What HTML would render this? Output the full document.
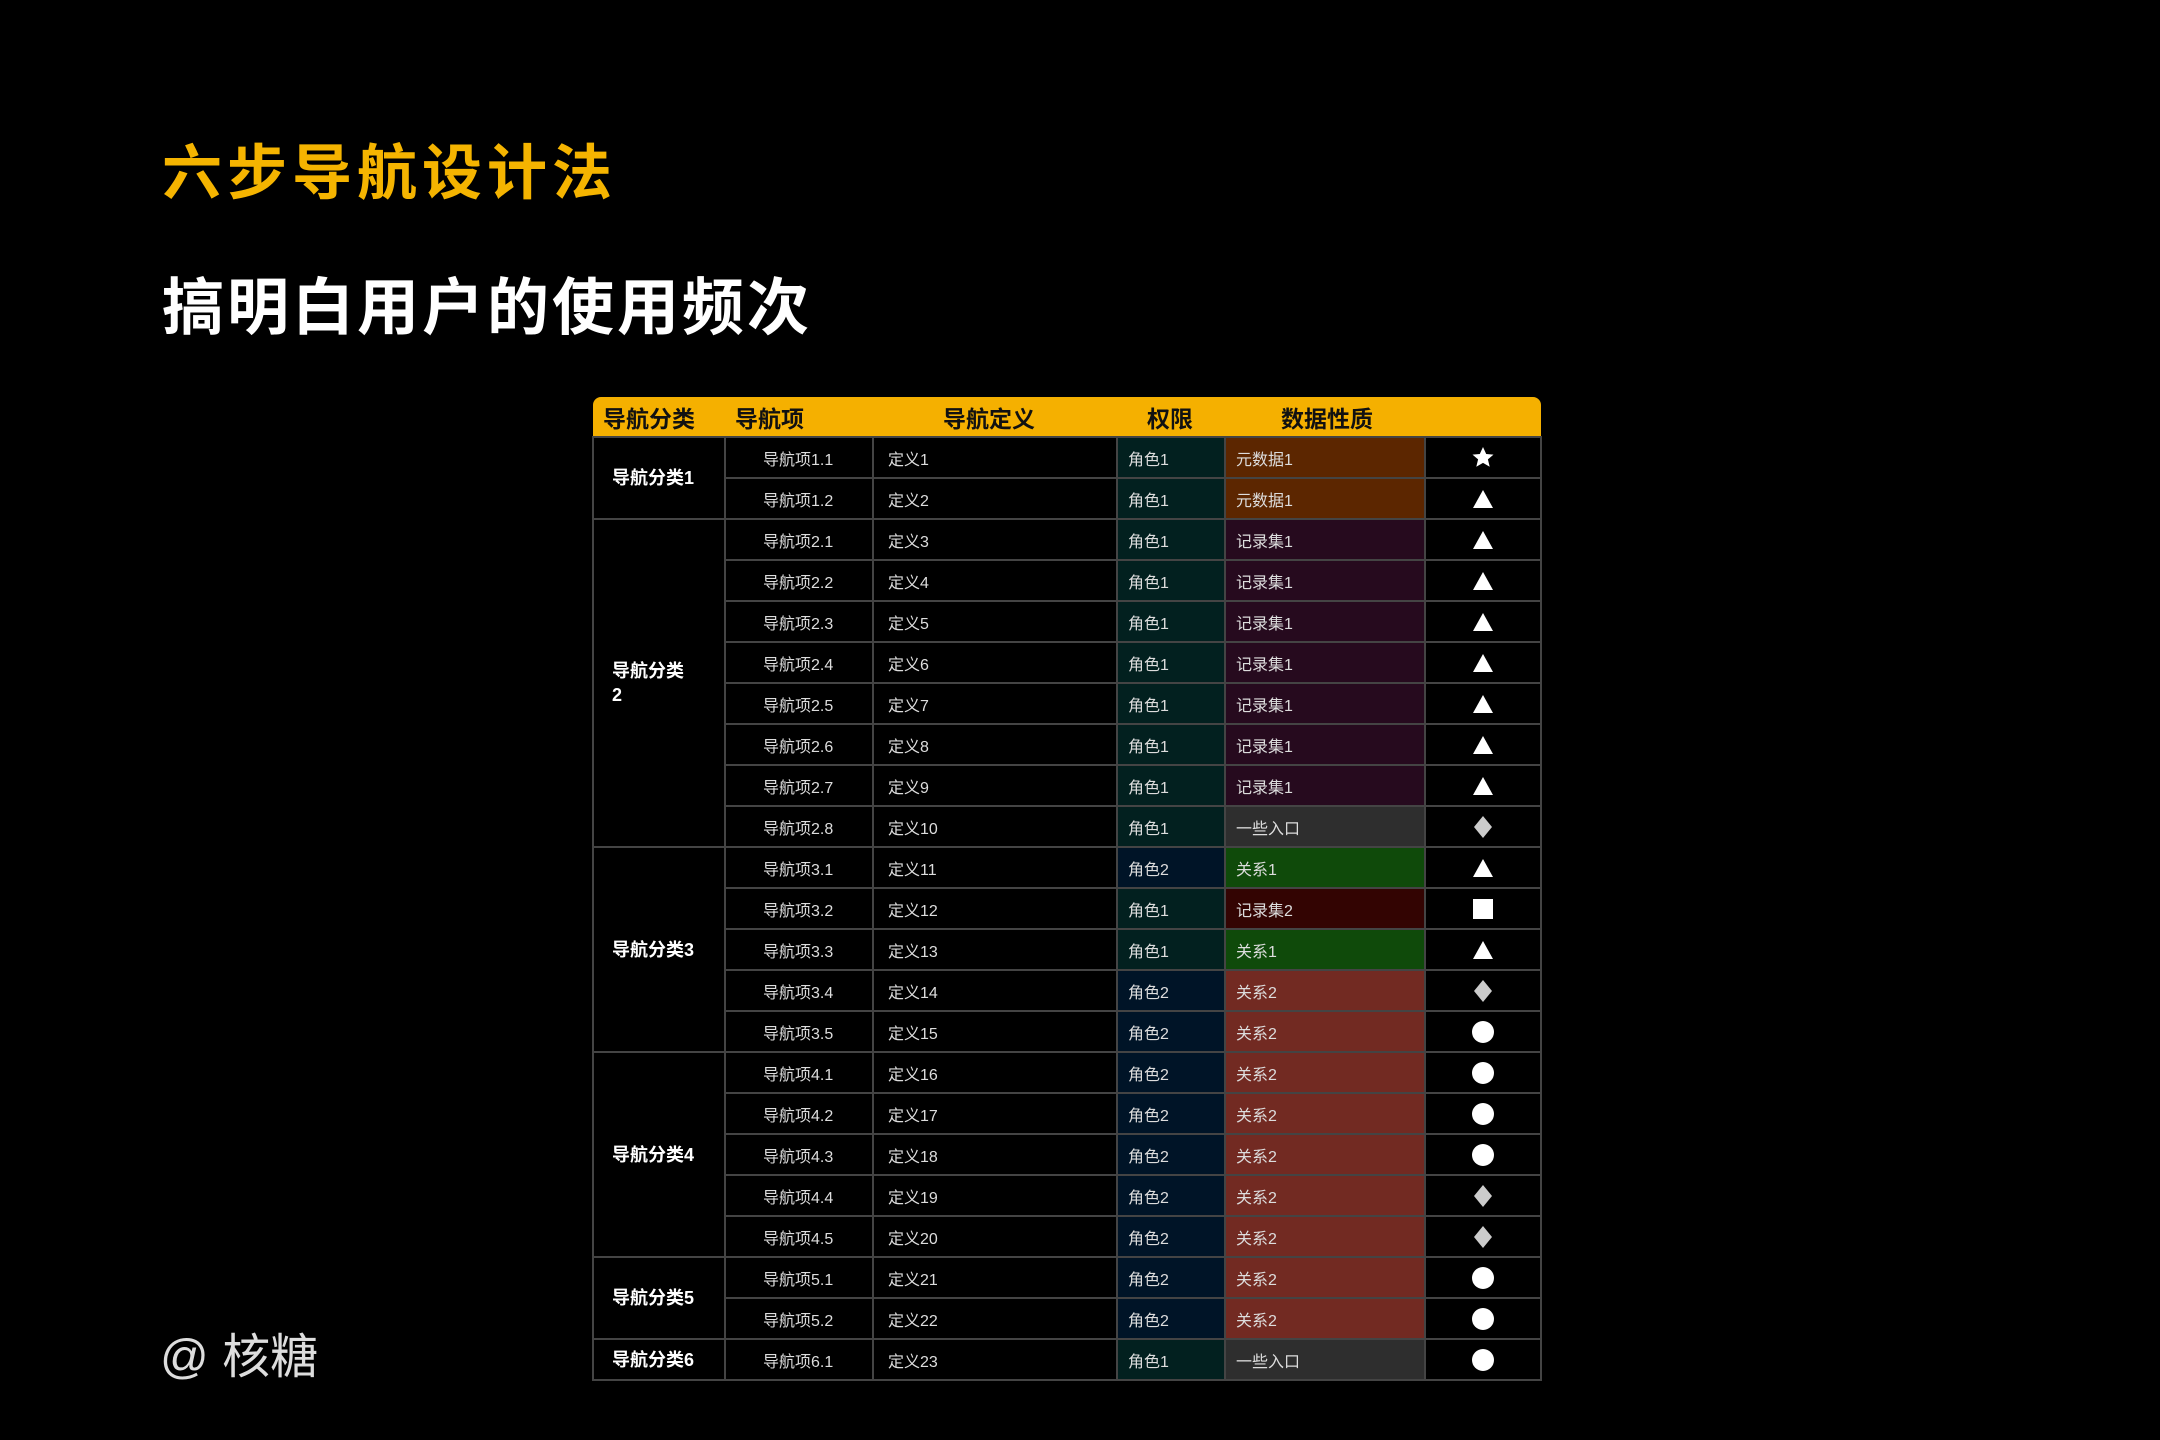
<!DOCTYPE html>
<html><head><meta charset="utf-8"><style>
html,body{margin:0;padding:0;background:#000;width:2160px;height:1440px;overflow:hidden;font-family:"Liberation Sans","Noto Sans CJK SC",sans-serif;}
.t1{position:absolute;left:162px;top:136px;font-size:60px;font-weight:bold;color:#f5b400;letter-spacing:5px;line-height:76px;}
.t2{position:absolute;left:162px;top:270px;font-size:62px;font-weight:bold;color:#fff;letter-spacing:3px;line-height:78px;}
.sig{position:absolute;left:160px;top:1328px;font-size:48px;color:#ddd;line-height:60px;}
table{position:absolute;left:592px;top:397px;width:948px;border-collapse:collapse;table-layout:fixed;}
th{background:#f5b000;height:39px;font-size:23px;font-weight:bold;color:#111;padding:0;text-align:left;}
th:first-child{border-top-left-radius:8px;padding-left:10px}
th:last-child{border-top-right-radius:8px}
td{height:39px;border:2px solid #444;font-size:16px;color:#ddd;padding:0;}
td.c{font-size:18px;font-weight:600;color:#fff;padding-left:18px;line-height:24px}
td.n{padding-left:37px}
td.d{padding-left:14px}
td.r{padding-left:10px}
td.x{padding-left:10px}
td.i{text-align:center}
.r1{background:#02201f}.r2{background:#001427}
.m{background:#5c2600}.j{background:#260a1e}.e{background:#2e2e2e}.g{background:#0f4a0a}.k{background:#330402}.b{background:#722a22}
svg{display:block;margin:0 auto}
</style></head><body>
<div class="t1">六步导航设计法</div>
<div class="t2">搞明白用户的使用频次</div>
<div class="sig">@ 核糖</div>
<table>
<colgroup><col style="width:132px"><col style="width:148px"><col style="width:244px"><col style="width:108px"><col style="width:200px"><col style="width:116px"></colgroup>
<tr><th>导航分类</th><th style="padding-left:10px">导航项</th><th style="padding-left:70px">导航定义</th><th style="padding-left:30px">权限</th><th style="padding-left:56px">数据性质</th><th></th></tr>
<tr><td class="c" rowspan="2">导航分类1</td><td class="n">导航项1.1</td><td class="d">定义1</td><td class="r r1">角色1</td><td class="x m">元数据1</td><td class="i"><svg width="24" height="24" viewBox="0 0 24 24"><path d="M12 1l3.2 7 7.3.6-5.6 4.8 1.8 7.4L12 16.9 5.3 20.8l1.8-7.4L1.5 8.6l7.3-.6z" fill="#fff"/></svg></td></tr>
<tr><td class="n">导航项1.2</td><td class="d">定义2</td><td class="r r1">角色1</td><td class="x m">元数据1</td><td class="i"><svg width="22" height="20"><path d="M11 1L21 19H1z" fill="#fff"/></svg></td></tr>
<tr><td class="c" rowspan="8">导航分类<br>2</td><td class="n">导航项2.1</td><td class="d">定义3</td><td class="r r1">角色1</td><td class="x j">记录集1</td><td class="i"><svg width="22" height="20"><path d="M11 1L21 19H1z" fill="#fff"/></svg></td></tr>
<tr><td class="n">导航项2.2</td><td class="d">定义4</td><td class="r r1">角色1</td><td class="x j">记录集1</td><td class="i"><svg width="22" height="20"><path d="M11 1L21 19H1z" fill="#fff"/></svg></td></tr>
<tr><td class="n">导航项2.3</td><td class="d">定义5</td><td class="r r1">角色1</td><td class="x j">记录集1</td><td class="i"><svg width="22" height="20"><path d="M11 1L21 19H1z" fill="#fff"/></svg></td></tr>
<tr><td class="n">导航项2.4</td><td class="d">定义6</td><td class="r r1">角色1</td><td class="x j">记录集1</td><td class="i"><svg width="22" height="20"><path d="M11 1L21 19H1z" fill="#fff"/></svg></td></tr>
<tr><td class="n">导航项2.5</td><td class="d">定义7</td><td class="r r1">角色1</td><td class="x j">记录集1</td><td class="i"><svg width="22" height="20"><path d="M11 1L21 19H1z" fill="#fff"/></svg></td></tr>
<tr><td class="n">导航项2.6</td><td class="d">定义8</td><td class="r r1">角色1</td><td class="x j">记录集1</td><td class="i"><svg width="22" height="20"><path d="M11 1L21 19H1z" fill="#fff"/></svg></td></tr>
<tr><td class="n">导航项2.7</td><td class="d">定义9</td><td class="r r1">角色1</td><td class="x j">记录集1</td><td class="i"><svg width="22" height="20"><path d="M11 1L21 19H1z" fill="#fff"/></svg></td></tr>
<tr><td class="n">导航项2.8</td><td class="d">定义10</td><td class="r r1">角色1</td><td class="x e">一些入口</td><td class="i"><svg width="20" height="24"><path d="M10 1L19 12 10 23 1 12z" fill="#ccc"/></svg></td></tr>
<tr><td class="c" rowspan="5">导航分类3</td><td class="n">导航项3.1</td><td class="d">定义11</td><td class="r r2">角色2</td><td class="x g">关系1</td><td class="i"><svg width="22" height="20"><path d="M11 1L21 19H1z" fill="#fff"/></svg></td></tr>
<tr><td class="n">导航项3.2</td><td class="d">定义12</td><td class="r r1">角色1</td><td class="x k">记录集2</td><td class="i"><svg width="20" height="20"><rect x="0" y="0" width="20" height="20" fill="#fff"/></svg></td></tr>
<tr><td class="n">导航项3.3</td><td class="d">定义13</td><td class="r r1">角色1</td><td class="x g">关系1</td><td class="i"><svg width="22" height="20"><path d="M11 1L21 19H1z" fill="#fff"/></svg></td></tr>
<tr><td class="n">导航项3.4</td><td class="d">定义14</td><td class="r r2">角色2</td><td class="x b">关系2</td><td class="i"><svg width="20" height="24"><path d="M10 1L19 12 10 23 1 12z" fill="#ccc"/></svg></td></tr>
<tr><td class="n">导航项3.5</td><td class="d">定义15</td><td class="r r2">角色2</td><td class="x b">关系2</td><td class="i"><svg width="22" height="22"><circle cx="11" cy="11" r="11" fill="#fff"/></svg></td></tr>
<tr><td class="c" rowspan="5">导航分类4</td><td class="n">导航项4.1</td><td class="d">定义16</td><td class="r r2">角色2</td><td class="x b">关系2</td><td class="i"><svg width="22" height="22"><circle cx="11" cy="11" r="11" fill="#fff"/></svg></td></tr>
<tr><td class="n">导航项4.2</td><td class="d">定义17</td><td class="r r2">角色2</td><td class="x b">关系2</td><td class="i"><svg width="22" height="22"><circle cx="11" cy="11" r="11" fill="#fff"/></svg></td></tr>
<tr><td class="n">导航项4.3</td><td class="d">定义18</td><td class="r r2">角色2</td><td class="x b">关系2</td><td class="i"><svg width="22" height="22"><circle cx="11" cy="11" r="11" fill="#fff"/></svg></td></tr>
<tr><td class="n">导航项4.4</td><td class="d">定义19</td><td class="r r2">角色2</td><td class="x b">关系2</td><td class="i"><svg width="20" height="24"><path d="M10 1L19 12 10 23 1 12z" fill="#ccc"/></svg></td></tr>
<tr><td class="n">导航项4.5</td><td class="d">定义20</td><td class="r r2">角色2</td><td class="x b">关系2</td><td class="i"><svg width="20" height="24"><path d="M10 1L19 12 10 23 1 12z" fill="#ccc"/></svg></td></tr>
<tr><td class="c" rowspan="2">导航分类5</td><td class="n">导航项5.1</td><td class="d">定义21</td><td class="r r2">角色2</td><td class="x b">关系2</td><td class="i"><svg width="22" height="22"><circle cx="11" cy="11" r="11" fill="#fff"/></svg></td></tr>
<tr><td class="n">导航项5.2</td><td class="d">定义22</td><td class="r r2">角色2</td><td class="x b">关系2</td><td class="i"><svg width="22" height="22"><circle cx="11" cy="11" r="11" fill="#fff"/></svg></td></tr>
<tr><td class="c">导航分类6</td><td class="n">导航项6.1</td><td class="d">定义23</td><td class="r r1">角色1</td><td class="x e">一些入口</td><td class="i"><svg width="22" height="22"><circle cx="11" cy="11" r="11" fill="#fff"/></svg></td></tr>
</table>
</body></html>
